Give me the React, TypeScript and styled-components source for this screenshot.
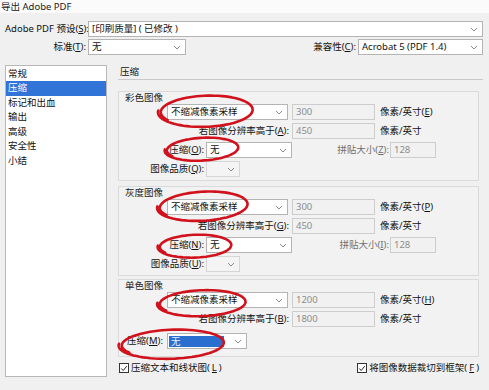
import React from 'react';
import styled, { createGlobalStyle } from 'styled-components';

const GlobalStyle = createGlobalStyle`
  html, body {
    margin: 0;
    padding: 0;
    background: #f0f0f0;
  }
  body {
    font-family: "Noto Sans", "Noto Sans CJK SC", sans-serif;
    font-size: 9.5px;
    color: #111;
  }
`;

const Chevron = () => (
  <svg width="8" height="5" viewBox="0 0 8 5">
    <path d="M1 1 L4 4 L7 1" stroke="#8a8a8a" strokeWidth="1" fill="none" />
  </svg>
);

const Check = () => (
  <svg width="9" height="9" viewBox="0 0 9 9">
    <path d="M1.5 4.5 L3.6 6.8 L7.6 1.8" stroke="#222" strokeWidth="1.1" fill="none" />
  </svg>
);

// hand drawn red loops over the dialog
const loops = [
  { cx: 206, cy: 111, rx: 45, ry: 15, rot: -2 },
  { cx: 202, cy: 149, rx: 35, ry: 11, rot: -3 },
  { cx: 203, cy: 206, rx: 43, ry: 14, rot: -3 },
  { cx: 195, cy: 246, rx: 35, ry: 11, rot: -2 },
  { cx: 202, cy: 303, rx: 42, ry: 12.5, rot: -2 },
  { cx: 172, cy: 344, rx: 50, ry: 14, rot: -2 },
];

const loopPath = (l: { cx: number; cy: number; rx: number; ry: number; rot: number }) => {
  const pts: string[] = [];
  const end = Math.PI * 2 + 0.7;
  const a = (l.rot * Math.PI) / 180;
  for (let t = 0; t <= end; t += 0.08) {
    const k = 1 + 0.07 * (t / end);
    const x = Math.cos(t + 2.6) * l.rx * k;
    const y = Math.sin(t + 2.6) * l.ry * k;
    pts.push(
      `${(l.cx + x * Math.cos(a) - y * Math.sin(a)).toFixed(1)},${(l.cy + x * Math.sin(a) + y * Math.cos(a)).toFixed(1)}`
    );
  }
  return 'M' + pts.join(' L');
};

export default function App() {
  return (
    <Page>
      <GlobalStyle />
      <TitleBar>导出 Adobe PDF</TitleBar>

      <Header>
        <HeadRow>
          <Label $w={83}>Adobe PDF 预设(<u>S</u>):</Label>
          <Select $grow>
            <span>[印刷质量] ( 已修改 )</span>
            <Chevron />
          </Select>
        </HeadRow>
        <HeadRow>
          <Label $w={83}>标准(<u>T</u>):</Label>
          <Select $w={98}>
            <span>无</span>
            <Chevron />
          </Select>
          <Label $grow>兼容性(<u>C</u>):</Label>
          <Select $w={125}>
            <span>Acrobat 5 (PDF 1.4)</span>
            <Chevron />
          </Select>
        </HeadRow>
      </Header>

      <Body>
        <ListBox>
          <ListItem>常规</ListItem>
          <ListItem $active>压缩</ListItem>
          <ListItem>标记和出血</ListItem>
          <ListItem>输出</ListItem>
          <ListItem>高级</ListItem>
          <ListItem>安全性</ListItem>
          <ListItem>小结</ListItem>
        </ListBox>

        <Panel>
          <PanelTitle>压缩</PanelTitle>

          <Group $mt={11}>
            <GroupLabel>彩色图像</GroupLabel>
            <Row $mt={0}>
              <Spacer $w={48} />
              <Select $w={121}>
                <span>不缩减像素采样</span>
                <Chevron />
              </Select>
              <Field $w={83} $ml={4}>300</Field>
              <Unit>像素/英寸(<u>E</u>)</Unit>
            </Row>
            <Row>
              <Label $w={173} $pr={3}>若图像分辨率高于(<u>A</u>):</Label>
              <Field $w={83}>450</Field>
              <Unit>像素/英寸</Unit>
            </Row>
            <Row>
              <Label $w={87}>压缩(<u>O</u>):</Label>
              <Select $w={86}>
                <span>无</span>
                <Chevron />
              </Select>
              <Label $w={98} $muted $pr={1}>拼贴大小(<u>Z</u>):</Label>
              <Field $w={46}>128</Field>
            </Row>
            <Row>
              <Label $w={87}>图像品质(<u>Q</u>):</Label>
              <Select $w={34} $disabled>
                <span />
                <Chevron />
              </Select>
            </Row>
          </Group>

          <Group $mt={5}>
            <GroupLabel>灰度图像</GroupLabel>
            <Row $mt={0}>
              <Spacer $w={48} />
              <Select $w={121}>
                <span>不缩减像素采样</span>
                <Chevron />
              </Select>
              <Field $w={83} $ml={4}>300</Field>
              <Unit>像素/英寸(<u>P</u>)</Unit>
            </Row>
            <Row>
              <Label $w={173} $pr={3}>若图像分辨率高于(<u>G</u>):</Label>
              <Field $w={83}>450</Field>
              <Unit>像素/英寸</Unit>
            </Row>
            <Row>
              <Label $w={87}>压缩(<u>N</u>):</Label>
              <Select $w={86}>
                <span>无</span>
                <Chevron />
              </Select>
              <Label $w={98} $muted $pr={1}>拼贴大小(<u>I</u>):</Label>
              <Field $w={46}>128</Field>
            </Row>
            <Row>
              <Label $w={87}>图像品质(<u>U</u>):</Label>
              <Select $w={34} $disabled>
                <span />
                <Chevron />
              </Select>
            </Row>
          </Group>

          <Group $mt={3} $pb={7}>
            <GroupLabel>单色图像</GroupLabel>
            <Row $mt={0}>
              <Spacer $w={48} />
              <Select $w={121}>
                <span>不缩减像素采样</span>
                <Chevron />
              </Select>
              <Field $w={83} $ml={4}>1200</Field>
              <Unit>像素/英寸(<u>H</u>)</Unit>
            </Row>
            <Row>
              <Label $w={173} $pr={3}>若图像分辨率高于(<u>B</u>):</Label>
              <Field $w={83}>1800</Field>
              <Unit>像素/英寸</Unit>
            </Row>
            <Row $mt={6}>
              <Label $w={48} $pr={4}>压缩(<u>M</u>):</Label>
              <Select $w={80}>
                <Picked>无</Picked>
                <Chevron />
              </Select>
            </Row>
          </Group>

          <CheckRow>
            <CheckItem>
              <CheckBox><Check /></CheckBox>
              压缩文本和线状图(<u>L</u>)
            </CheckItem>
            <CheckItem>
              <CheckBox><Check /></CheckBox>
              将图像数据裁切到框架(<u>F</u>)
            </CheckItem>
          </CheckRow>
        </Panel>
      </Body>

      <Marks width="489" height="390" viewBox="0 0 489 390">
        {loops.map((l, i) => (
          <path
            key={i}
            d={loopPath(l)}
            stroke="#d1121c"
            strokeWidth="2.6"
            fill="none"
            strokeLinecap="round"
            strokeLinejoin="round"
          />
        ))}
      </Marks>
    </Page>
  );
}

const Page = styled.div`
  position: relative;
  width: 489px;
  height: 390px;
  overflow: hidden;
  background: #f0f0f0;
`;

const TitleBar = styled.div`
  height: 13px;
  background: #fbfbfb;
  font-size: 9.5px;
  line-height: 13px;
  padding-left: 1px;
  color: #222;
  white-space: nowrap;
`;

const Header = styled.div`
  padding: 8px 6px 0 5px;
  display: flex;
  flex-direction: column;
  gap: 2px;
`;

const HeadRow = styled.div`
  display: flex;
  align-items: center;
  height: 16px;
`;

const Label = styled.span<{ $w?: number; $grow?: boolean; $muted?: boolean; $pr?: number }>`
  ${(p) => (p.$grow ? 'flex: 1;' : `flex: none; width: ${p.$w}px;`)}
  box-sizing: border-box;
  padding-right: ${(p) => p.$pr ?? 2}px;
  text-align: right;
  white-space: nowrap;
  line-height: 14px;
  color: ${(p) => (p.$muted ? '#6f6f6f' : '#111')};

  u {
    text-decoration-thickness: 1px;
  }
`;

const Select = styled.div<{ $w?: number; $grow?: boolean; $disabled?: boolean }>`
  ${(p) => (p.$grow ? 'flex: 1;' : `flex: none; width: ${p.$w}px;`)}
  box-sizing: border-box;
  height: 16px;
  display: flex;
  align-items: center;
  justify-content: space-between;
  padding: 0 4px 0 3px;
  border: 1px solid ${(p) => (p.$disabled ? '#d6d6d6' : '#b4b4b4')};
  background: ${(p) => (p.$disabled ? '#f4f4f4' : '#fff')};
  white-space: nowrap;
  line-height: 14px;
  color: #111;

  svg {
    flex: none;
  }
`;

const Picked = styled.span`
  flex: 1;
  margin: 1px 10px 1px -2px;
  padding-left: 2px;
  height: 11px;
  line-height: 11px;
  background: #2a6fd0;
  color: #e8f0ff;
`;

const Field = styled.div<{ $w: number; $ml?: number }>`
  flex: none;
  width: ${(p) => p.$w}px;
  margin-left: ${(p) => p.$ml ?? 0}px;
  box-sizing: border-box;
  height: 16px;
  padding-left: 3px;
  border: 1px solid #cdcdcd;
  background: #f1f1f1;
  color: #8c8c8c;
  line-height: 14px;
`;

const Unit = styled.span`
  margin-left: 5px;
  white-space: nowrap;
  line-height: 14px;
`;

const Spacer = styled.div<{ $w: number }>`
  flex: none;
  width: ${(p) => p.$w}px;
`;

const Body = styled.div`
  display: flex;
  margin-top: 10px;
  padding-left: 5px;
  gap: 11px;
`;

const ListBox = styled.div`
  flex: none;
  width: 102px;
  height: 312px;
  box-sizing: border-box;
  border: 1px solid #b8b8b8;
  background: #fff;
  padding-top: 0.5px;
`;

const ListItem = styled.div<{ $active?: boolean }>`
  height: 14.5px;
  line-height: 14.5px;
  padding-left: 2px;
  background: ${(p) => (p.$active ? '#2f74d6' : 'transparent')};
  color: ${(p) => (p.$active ? '#fff' : '#111')};
`;

const Panel = styled.div`
  flex: none;
  width: 365px;
  display: flex;
  flex-direction: column;
`;

const PanelTitle = styled.div`
  height: 14px;
  line-height: 14px;
  padding-left: 2px;
  border-bottom: 1px solid #c9c9c9;
`;

const Group = styled.div<{ $mt: number; $pb?: number }>`
  margin-top: ${(p) => p.$mt}px;
  width: 361px;
  box-sizing: border-box;
  border: 1px solid #dadada;
  background: #f2f2f2;
  padding-bottom: ${(p) => p.$pb ?? 3}px;
`;

const GroupLabel = styled.div`
  height: 12px;
  line-height: 12px;
  padding-left: 6px;
  color: #222;
`;

const Row = styled.div<{ $mt?: number }>`
  display: flex;
  align-items: center;
  height: 16px;
  margin-top: ${(p) => p.$mt ?? 3}px;
`;

const CheckRow = styled.div`
  display: flex;
  justify-content: space-between;
  align-items: center;
  margin-top: 5px;
  height: 12px;
  padding: 0 4px 0 1px;
`;

const CheckItem = styled.div`
  display: flex;
  align-items: center;
  gap: 2px;
  white-space: nowrap;
  line-height: 12px;
`;

const CheckBox = styled.div`
  width: 10px;
  height: 10px;
  box-sizing: border-box;
  border: 1px solid #333;
  background: #fff;
  display: flex;
  align-items: center;
  justify-content: center;
`;

const Marks = styled.svg`
  position: absolute;
  left: 0;
  top: 0;
  pointer-events: none;
`;
